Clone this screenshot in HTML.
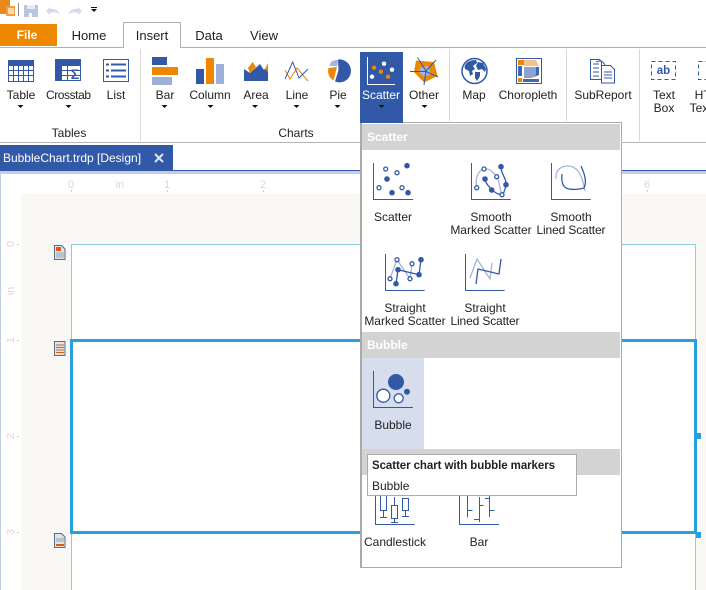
<!DOCTYPE html>
<html><head><meta charset="utf-8">
<style>
html,body{margin:0;padding:0;background:#fff;width:706px;height:590px;overflow:hidden}
svg{display:block;position:absolute;left:0;top:0}
text{font-family:"Liberation Sans",sans-serif;font-size:12px;fill:#222;text-anchor:middle}
.tab{font-size:13px}
.ruler{fill:#dcd7ce;font-size:11px}
.b{stroke:#3259a8;fill:none}
.c{stroke:#3259a8;fill:none;stroke-width:1.300}
.f{fill:#3259a8}
.h{fill:#fff;stroke:#3259a8;stroke-width:1.300}
.l{stroke:#a3b5da;fill:none;stroke-width:1.300}
</style></head><body>
<svg width="706" height="590" viewBox="0 0 706 590" xmlns="http://www.w3.org/2000/svg">
<!-- QAT -->
<rect x="0" y="0" width="10" height="14" fill="#e88a1a"/>
<rect x="6" y="6" width="9" height="10" fill="#f0a040"/>
<rect x="8" y="8" width="6" height="6" fill="#f8d9ae"/>
<rect x="18" y="3" width="1" height="13" fill="#8a8a8a"/>
<rect x="24" y="5" width="14" height="12" fill="#b8c6e0"/>
<rect x="27" y="5" width="8" height="4" fill="#e8edf5"/>
<rect x="29" y="13" width="3" height="4" fill="#fff"/>
<path d="M46 11l4-4v2c4-1 8 1 10 6-3-3-6-3-10-2v2z" fill="#d3dbeb"/>
<path d="M82 11l-4-4v2c-4-1-8 1-10 6 3-3 6-3 10-2v2z" fill="#d3dbeb"/>
<rect x="91" y="7" width="6" height="1" fill="#111"/><path d="M91 9h6l-3 3z" fill="#111"/>
<!-- tabs -->
<rect x="0" y="24" width="57" height="22" fill="#ed8700"/>
<text x="27" y="39" style="fill:#fff;font-weight:bold">File</text>
<text class="tab" x="89" y="40">Home</text>
<path d="M0 47.500H123.500V22.500H180.500V47.500H706" fill="#fff" stroke="#b0b0b0"/>
<text class="tab" x="152" y="40">Insert</text>
<text class="tab" x="209" y="40">Data</text>
<text class="tab" x="264" y="40">View</text>
<!-- ribbon separators -->
<rect x="0" y="142" width="706" height="1" fill="#b4b4b4"/>
<rect x="140" y="49" width="1" height="92" fill="#d8d8d8"/>
<rect x="449" y="49" width="1" height="72" fill="#d8d8d8"/>
<rect x="566" y="49" width="1" height="72" fill="#d8d8d8"/>
<rect x="639" y="49" width="1" height="92" fill="#d8d8d8"/>
<!-- Table -->
<rect x="8" y="60" width="26" height="6" class="f"/>
<path d="M8.500 66V81.500H33.500V66M8 70.500H34M8 75.500H34M13.500 66V81M18.500 66V81M23.500 66V81M28.500 66V81" class="b"/>
<!-- Crosstab -->
<rect x="55" y="59" width="26" height="7" class="f"/><rect x="55" y="59" width="7" height="22" class="f"/>
<path d="M55.500 59.500H80.500V80.500H55.500Z M62 70.500H81M62 75.500H81M67.500 66V81" class="b"/>
<text x="75" y="79" style="fill:#3259a8;font-size:14px;font-weight:bold">Σ</text>
<!-- List -->
<rect x="103.500" y="59.500" width="25" height="22" class="b"/>
<path d="M106 64.500h3M111 64.500h15M106 70.500h3M111 70.500h15M106 76.500h3M111 76.500h15" class="b" stroke-width="2"/>
<!-- Bar -->
<rect x="152" y="57" width="15" height="8" class="f"/><rect x="152" y="67" width="26" height="8" fill="#ed8700"/><rect x="152" y="77" width="20" height="8" fill="#9db0d8"/>
<!-- Column -->
<rect x="196" y="69" width="8" height="15" class="f"/><rect x="206" y="58" width="8" height="26" fill="#ed8700"/><rect x="216" y="64" width="8" height="20" fill="#9db0d8"/>
<!-- Area -->
<path d="M244 69L250 73L260 64L264 70L268 65V81H244Z" class="f"/>
<path d="M252.700 62L248 68L250 73L256 67Z" fill="#ed8700"/>
<path d="M265 69L268 63V72Z" fill="#ed8700"/>
<!-- Line -->
<path d="M285 70L290 79L297 68L308 81" fill="none" stroke="#ed8700"/>
<path d="M285 79L292.700 62L299 78L308 69" fill="none" stroke="#3259a8"/>
<!-- Pie -->
<path d="M338 59.500A11.500 11.500 0 1 1 335 81.500L338.500 70Z" class="f"/>
<path d="M328.500 68L337 67L333.500 80.500A11 11 0 0 1 328.500 68Z" fill="#ed8700"/>
<path d="M331 62A11 11 0 0 1 338 60L337.500 66L329.500 66Z" fill="#a3b5da"/>
<!-- Scatter highlighted -->
<rect x="360" y="52" width="43" height="71" class="f"/>
<path d="M367.500 57V84.500H395" fill="none" stroke="#fff"/>
<circle cx="374" cy="67.700" r="2.200" fill="#ed8700"/><circle cx="384" cy="63.700" r="2.200" fill="#fff"/><circle cx="381" cy="71.700" r="2.200" fill="#ed8700"/><circle cx="372" cy="76.700" r="2.200" fill="#fff"/><circle cx="388" cy="76.700" r="2.200" fill="#ed8700"/><circle cx="392" cy="69.700" r="2.200" fill="#fff"/>
<!-- Other radar -->
<path d="M416 60.500L434 62L437.500 76L424 82.500L414 72Z" fill="#ed8700"/>
<path d="M420 68L428 65.500L431 74L424 77L419 72Z" fill="#a3b5da"/>
<path d="M417.500 57.500L426 71L436 60M410 71.500H426L438 77M426 71L424 85" fill="none" stroke="#3259a8"/>
<!-- Map -->
<circle cx="474.500" cy="71" r="12.500" fill="#fff" stroke="#3259a8" stroke-width="1.500"/>
<path d="M464.500 66.500C466 62 470 60 476 60L477 63L473 66L475 69L472 71L473 74L470 76L469 71L465 69ZM475 72L480 72L480 76L477 81L475 78ZM478 62L483 63L486 69L485 72L482 69L478 70L476 66Z" class="f"/>
<!-- Choropleth -->
<rect x="516.500" y="58.500" width="25" height="25" fill="#fff" stroke="#3259a8"/>
<rect x="518" y="60" width="6" height="5" fill="#ed8700"/><path d="M524 60h12l3 6h-15z" fill="#f2c48b"/>
<path d="M518 66h4v10h-4zM534 67h5v8l-5 2z" fill="#3f68b3"/><path d="M524 67h12v8l-4 3h-8z" fill="#8fa3d2"/>
<rect x="518" y="78" width="4" height="4" fill="#ed8700"/><path d="M523 79h16v3h-16z" fill="#3f68b3"/>
<!-- SubReport -->
<path d="M590.500 59.500h9l2 2v18h-11zM601.500 65.500h9l4 4v13.500h-13z" fill="#fff" stroke="#3259a8"/>
<path d="M593 64h6M593 68h6M593 72h6M593 76h6M604 72h8M604 75h8M604 78h8" class="b"/>
<path d="M596 62c4-2 7-1 9 3" fill="none" stroke="#3259a8"/>
<!-- Text box -->
<rect x="651.500" y="61.500" width="24" height="18" fill="none" stroke="#3259a8" stroke-dasharray="4 3"/>
<text x="663.500" y="74" style="fill:#3259a8;font-weight:bold;font-size:11.500px">ab</text>
<rect x="698.500" y="61.500" width="24" height="18" fill="none" stroke="#3259a8" stroke-dasharray="4 3"/>
<!-- Ribbon labels -->
<text x="21" y="99">Table</text><text x="68.500" y="99" textLength="45">Crosstab</text><text x="116" y="99">List</text>
<text x="165" y="99">Bar</text><text x="210" y="99">Column</text><text x="256" y="99">Area</text><text x="297" y="99">Line</text><text x="338" y="99">Pie</text>
<text x="381" y="99" style="fill:#fff">Scatter</text><text x="424" y="99">Other</text><text x="474" y="99">Map</text><text x="528" y="99">Choropleth</text><text x="603" y="99">SubReport</text>
<text x="664" y="99">Text</text><text x="664" y="112">Box</text><text x="711" y="99">HTML</text><text x="711" y="112">TextBox</text>
<g fill="#111"><path d="M17.500 105h6l-3 3z"/><path d="M65.500 105h6l-3 3z"/><path d="M161.500 105h6l-3 3z"/><path d="M207.500 105h6l-3 3z"/><path d="M252 105h6l-3 3z"/><path d="M293.500 105h6l-3 3z"/><path d="M334.500 105h6l-3 3z"/><path d="M378.500 105h6l-3 3z"/><path d="M421.500 105h6l-3 3z"/></g>
<text x="69" y="137">Tables</text><text x="296" y="137">Charts</text>
<!-- Document tab -->
<rect x="0" y="145" width="173" height="26" class="f"/>
<rect x="0" y="171" width="706" height="3" fill="#c3cde3"/>
<rect x="173" y="170" width="533" height="1" class="f"/>
<text x="72" y="162" style="fill:#fff">BubbleChart.trdp [Design]</text>
<path d="M155 154l8 8M163 154l-8 8" stroke="#dfe5f2" stroke-width="2"/>
<rect x="0" y="174" width="1" height="416" fill="#c3cde3"/>
<!-- Canvas -->
<rect x="21" y="194" width="685" height="396" fill="#f9f8f4"/>
<rect x="71.500" y="244.500" width="624" height="346" fill="#fff" stroke="#8ccbe8"/>
<rect x="71.500" y="340.500" width="624" height="192" fill="#fff" stroke="#27a0dc" stroke-width="3"/>
<rect x="697" y="433" width="4" height="6" fill="#27a0dc"/><rect x="696" y="532" width="5" height="6" fill="#27a0dc"/>
<!-- Rulers -->
<text class="ruler" x="71" y="188">0</text><text class="ruler" x="120" y="188">in</text><text class="ruler" x="167" y="188">1</text><text class="ruler" x="263" y="188">2</text><text class="ruler" x="647" y="188">6</text>
<g fill="#ccc"><rect x="71" y="190" width="1" height="2"/><rect x="167" y="190" width="1" height="2"/><rect x="263" y="190" width="1" height="2"/><rect x="647" y="190" width="1" height="2"/>
<rect x="17" y="244" width="2" height="1"/><rect x="17" y="340" width="2" height="1"/><rect x="17" y="436" width="2" height="1"/><rect x="17" y="532" width="2" height="1"/></g>
<text class="ruler" transform="translate(14,244) rotate(-90)">0</text><text class="ruler" transform="translate(14,291) rotate(-90)">in</text><text class="ruler" transform="translate(14,340) rotate(-90)">1</text><text class="ruler" transform="translate(14,436) rotate(-90)">2</text><text class="ruler" transform="translate(14,532) rotate(-90)">3</text>
<!-- Band icons -->
<path d="M54.500 245.500h7l3.500 3.500v10.500h-10.500z" fill="#dfe4ea" stroke="#56708c"/><rect x="56" y="247" width="5" height="4" fill="#e8590c"/><path d="M56 253h8M56 255h8M56 257h8" stroke="#94a4b4"/>
<path d="M54.500 341.500h10.500v14h-10.500z" fill="#dfe4ea" stroke="#56708c"/><path d="M56 345h8M56 347.500h8M56 350h8M56 352.500h8" stroke="#e8590c"/>
<path d="M54.500 533.500h7l3.500 3.500v10.500h-10.500z" fill="#dfe4ea" stroke="#56708c"/><path d="M56 539h8M56 541h8" stroke="#94a4b4"/><rect x="56" y="544" width="8" height="2" fill="#e8590c"/>
<!-- Dropdown -->
<rect x="360.500" y="122.500" width="261" height="445" fill="#fff" stroke="#aaa"/>
<rect x="360" y="122" width="2" height="446" fill="#aaa"/>
<rect x="360" y="122" width="43" height="1" class="f"/>
<rect x="362" y="124" width="258" height="26" fill="#d3d3d3"/>
<rect x="362" y="332" width="258" height="26" fill="#d3d3d3"/>
<rect x="362" y="449" width="258" height="26" fill="#d3d3d3"/>
<rect x="362" y="358" width="62" height="91" fill="#d6dded"/>
<text x="367" y="141" style="fill:#fff;font-weight:bold;text-anchor:start">Scatter</text>
<text x="367" y="349" style="fill:#fff;font-weight:bold;text-anchor:start">Bubble</text>
<!-- Scatter -->
<path d="M373.500 163V199.500H413" class="b"/>
<circle cx="385.700" cy="169" r="2" class="h"/><circle cx="397" cy="172.700" r="2" class="h"/><circle cx="379" cy="187.700" r="2" class="h"/><circle cx="402" cy="187.700" r="2" class="h"/>
<circle cx="407" cy="165.700" r="2.800" class="f"/><circle cx="387" cy="179" r="2.800" class="f"/><circle cx="392" cy="192.700" r="2.800" class="f"/><circle cx="408" cy="192.700" r="2.800" class="f"/>
<!-- Smooth marked -->
<path d="M471.500 163V199.500H510.700" class="b"/>
<path d="M476.700 187.700c-2-10 2-18 7.300-18.700 6-1 9 3 12.700 7.700 3 5 3 13 5.300 18" class="l"/>
<path d="M501 166.700c0 8 6 12 5 18-1 6-3 10-4 10-4 0-7-2-10-5-3-3-6-6-7-10" class="c"/>
<circle cx="484" cy="169" r="2" class="h"/><circle cx="496.700" cy="176.700" r="2" class="h"/><circle cx="476.700" cy="187.700" r="2" class="h"/><circle cx="502" cy="194.700" r="2" class="h"/>
<circle cx="501" cy="166.700" r="2.800" class="f"/><circle cx="485" cy="179" r="2.800" class="f"/><circle cx="506" cy="184.700" r="2.800" class="f"/><circle cx="491.700" cy="190" r="2.800" class="f"/>
<!-- Smooth lined -->
<path d="M551.500 163V199.500H590.700" class="b"/>
<path d="M556 179c-1-8 4-13 12-13 9 0 14 8 17 25" class="l"/>
<path d="M562 174c-1 9 1 14 7 15 5 1 12 0 15-1 3-6 1-13-3-22" class="c"/>
<!-- Straight marked -->
<path d="M385.500 254V290.500H424.700" class="b"/>
<path d="M390 278.700l7-19 13 19 2-15" class="l"/>
<path d="M396 283.700l2-14 21 5 2-15" class="c"/>
<circle cx="397" cy="259.700" r="2" class="h"/><circle cx="412" cy="263.700" r="2" class="h"/><circle cx="390" cy="278.700" r="2" class="h"/><circle cx="410" cy="278.700" r="2" class="h"/>
<circle cx="421" cy="259.700" r="2.800" class="f"/><circle cx="398" cy="269.700" r="2.800" class="f"/><circle cx="419" cy="274.700" r="2.800" class="f"/><circle cx="396" cy="283.700" r="2.800" class="f"/>
<!-- Straight lined -->
<path d="M465.500 254V290.500H504.700" class="b"/>
<path d="M470 278l7-19 13 20 2-16" class="l"/>
<path d="M476 284l2-15 21 5 2-15" class="c"/>
<!-- Bubble -->
<path d="M373.500 371V407.500H413" class="b"/>
<circle cx="396" cy="382" r="8" class="f"/><circle cx="383.300" cy="395.700" r="6.500" class="h"/><circle cx="398.700" cy="398.300" r="4.500" class="h"/><circle cx="407" cy="391.700" r="3" class="f"/>
<!-- Candlestick -->
<path d="M375.500 490V524.500H414.700" class="b"/>
<path d="M380.500 496v14.500h6V496M383.500 510.500v6.500M380 517.500h7M391.500 505.500h6v13h-6zM394.500 497v8M394.500 518.500v3.500M391 522.500h7M402.500 498.500h6v12h-6zM405.500 510.500v5.500M402 516.500h7" class="b"/>
<!-- Bar -->
<path d="M459.500 490V524.500H499" class="b"/>
<path d="M467.500 490v27.500M467.500 510.500h5M479.500 497v25M474 519.500h5M479.500 505.500h4M489.500 496v21M489.500 510.500h5M485 498.500h5" class="b"/>
<!-- Tile labels -->
<text x="393" y="221">Scatter</text>
<text x="491" y="221">Smooth</text><text x="491" y="234">Marked Scatter</text>
<text x="571" y="221">Smooth</text><text x="571" y="234" textLength="69">Lined Scatter</text>
<text x="405" y="312">Straight</text><text x="405" y="325">Marked Scatter</text>
<text x="485" y="312">Straight</text><text x="485" y="325" textLength="69">Lined Scatter</text>
<text x="393" y="429">Bubble</text>
<text x="395" y="546">Candlestick</text><text x="479" y="546">Bar</text>
<!-- Tooltip -->
<rect x="367.500" y="454.500" width="209" height="41" fill="#fff" stroke="#aaa"/>
<text x="372" y="469" textLength="183" style="font-weight:bold;text-anchor:start;font-size:11.500px">Scatter chart with bubble markers</text>
<text x="372" y="490" style="text-anchor:start">Bubble</text>
</svg>
</body></html>
